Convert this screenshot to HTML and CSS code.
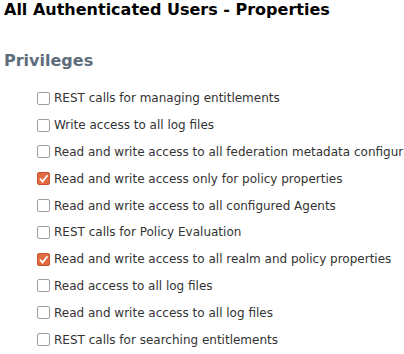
FILE: index.html
```html
<!DOCTYPE html>
<html>
<head>
<meta charset="utf-8">
<link rel="stylesheet" href="styles.css">
</head>
<body>
<h1 class="title">All Authenticated Users - Properties</h1>
<h2 class="section">Privileges</h2>
<ul class="list">
  <li class="item"><span class="box"></span><span class="label">REST calls for managing entitlements</span></li>
  <li class="item"><span class="box"></span><span class="label">Write access to all log files</span></li>
  <li class="item"><span class="box"></span><span class="label">Read and write access to all federation metadata configurations</span></li>
  <li class="item"><span class="box checked"><svg viewBox="0 0 13 13" width="13" height="13"><path d="M3 6.5 L5.5 9.5 L10.5 3.2" fill="none" stroke="#fff" stroke-width="1.8"/></svg></span><span class="label">Read and write access only for policy properties</span></li>
  <li class="item"><span class="box"></span><span class="label">Read and write access to all configured Agents</span></li>
  <li class="item"><span class="box"></span><span class="label">REST calls for Policy Evaluation</span></li>
  <li class="item"><span class="box checked"><svg viewBox="0 0 13 13" width="13" height="13"><path d="M3 6.5 L5.5 9.5 L10.5 3.2" fill="none" stroke="#fff" stroke-width="1.8"/></svg></span><span class="label">Read and write access to all realm and policy properties</span></li>
  <li class="item"><span class="box"></span><span class="label">Read access to all log files</span></li>
  <li class="item"><span class="box"></span><span class="label">Read and write access to all log files</span></li>
  <li class="item"><span class="box"></span><span class="label">REST calls for searching entitlements</span></li>
</ul>
</body>
</html>
```
FILE: styles.css
```css
html, body {
  margin: 0;
  padding: 0;
  background: #fff;
  overflow: hidden;
}
body {
  font-family: "DejaVu Sans", sans-serif;
  width: 404px;
  height: 354px;
}
.title {
  margin: 0;
  padding: 0 0 0 4px;
  font-size: 16px;
  font-weight: bold;
  color: #000;
  line-height: 19px;
}
.section {
  margin: 32px 0 0 0;
  padding-left: 4px;
  font-size: 16px;
  font-weight: bold;
  color: #5d6d7c;
  line-height: 19px;
}
.list {
  list-style: none;
  margin: 15px 0 0 0;
  padding: 0 0 0 37px;
}
.item {
  display: flex;
  align-items: center;
  height: 26.8px;
  white-space: nowrap;
  overflow: hidden;
}
.box {
  flex: none;
  width: 11px;
  height: 11px;
  border: 1px solid #a0a0a0;
  border-radius: 2px;
  margin-right: 4px;
  background: #fff;
  position: relative;
}
.box.checked {
  background: #e06b43;
  border-color: #c4552f;
}
.box svg {
  display: block;
  position: absolute;
  left: -1px;
  top: -1px;
}
.label {
  font-size: 12px;
  color: #333;
}
```
